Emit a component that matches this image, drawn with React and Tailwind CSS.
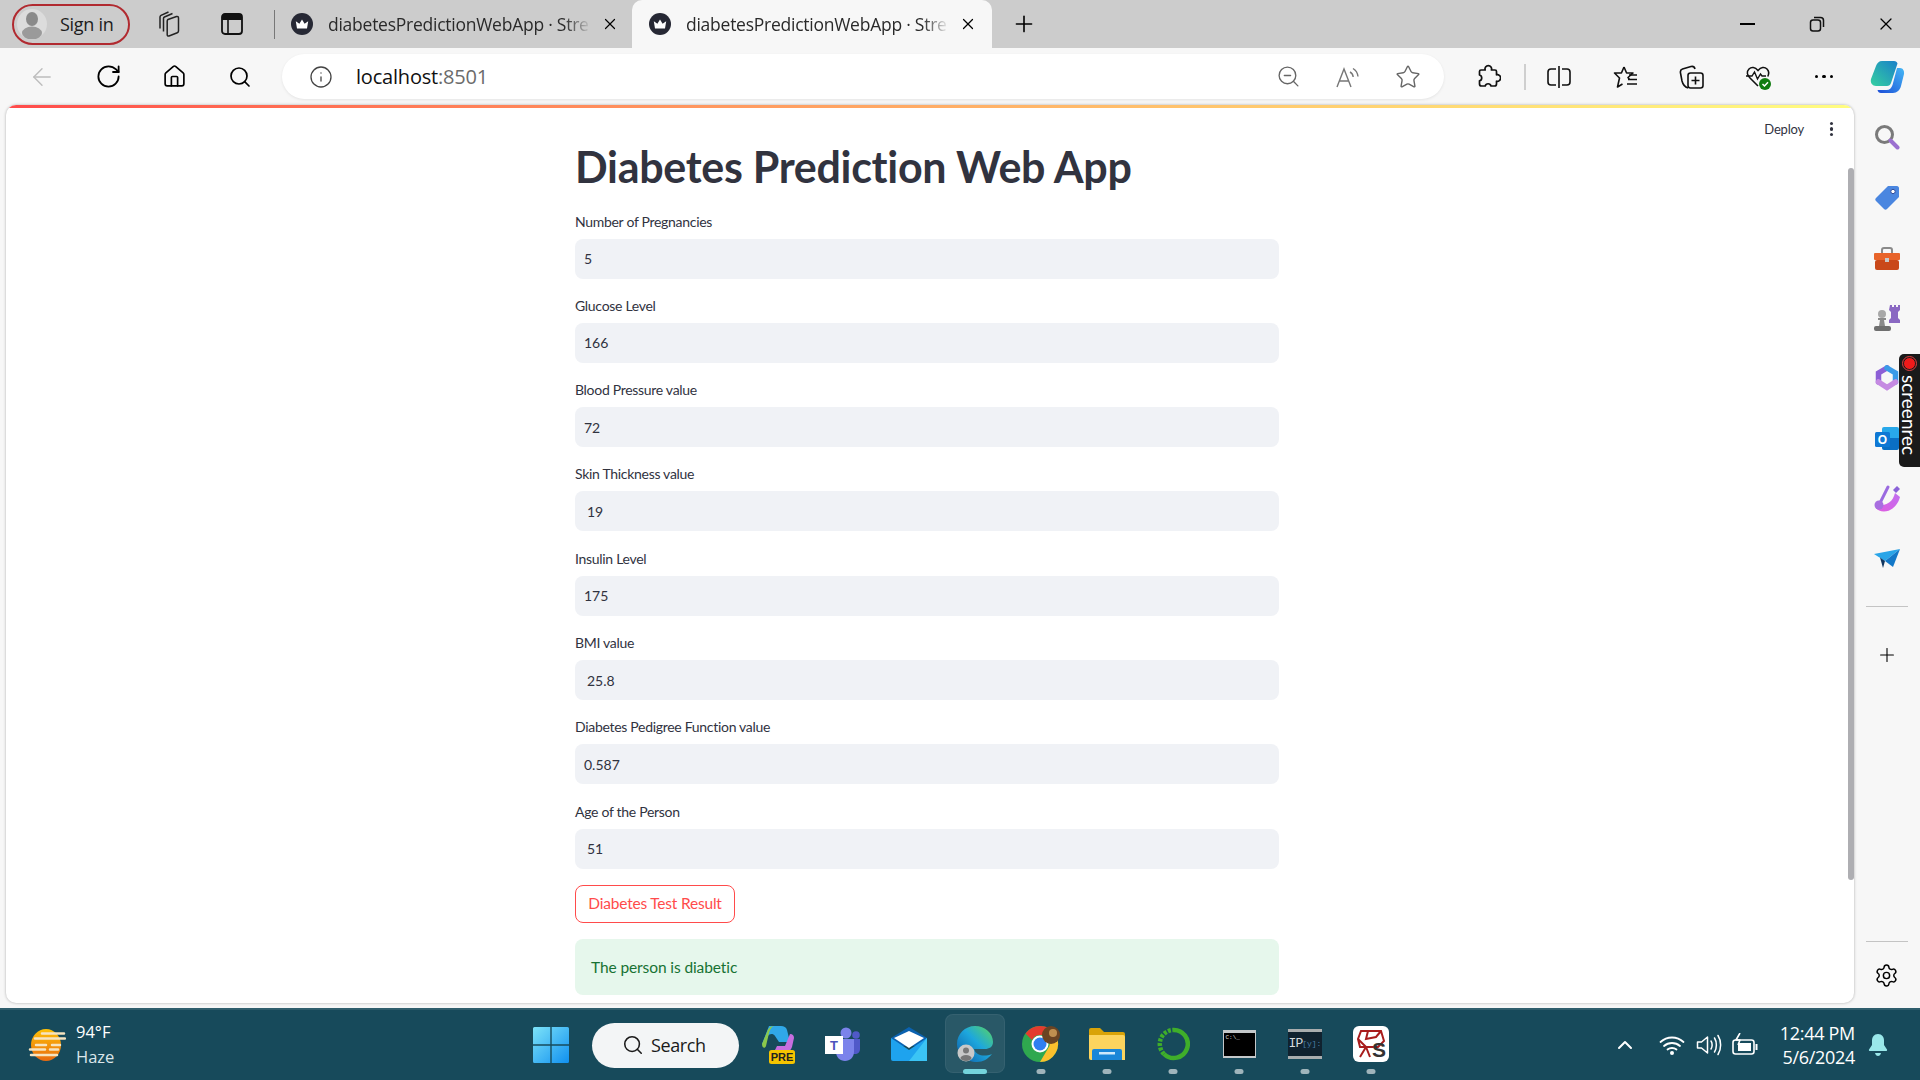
import {
  ArrowLeft,
  ChevronUp,
  House,
  Info,
  Plus,
  RotateCw,
  Search,
  Settings,
  Star,
  X,
  ZoomOut,
} from "lucide-react";

const fields = [
  { label: "Number of Pregnancies", value: "5", pad: "pl-[9px]" },
  { label: "Glucose Level", value: "166", pad: "pl-[9px]" },
  { label: "Blood Pressure value", value: "72", pad: "pl-[9px]" },
  { label: "Skin Thickness value", value: "19", pad: "pl-[12px]" },
  { label: "Insulin Level", value: "175", pad: "pl-[9px]" },
  { label: "BMI value", value: "25.8", pad: "pl-[12px]" },
  { label: "Diabetes Pedigree Function value", value: "0.587", pad: "pl-[9px]" },
  { label: "Age of the Person", value: "51", pad: "pl-[12px]" },
];

const Favicon = () => (
  <svg width="22" height="22" viewBox="0 0 22 22" className="shrink-0">
    <circle cx="11" cy="11" r="11" fill="#262834" />
    <path d="M6 15.5 4.8 8.2 8.4 10.8 11 6.5l2.6 4.3 3.6-2.6-1.2 7.3z" fill="#fff" />
  </svg>
);

const Tab = ({ active }) => (
  <div
    className={`flex items-center h-12 ${
      active ? "w-[360px] bg-[#f7f7f7] rounded-t-[10px] pl-[17px]" : "w-[357px] pl-[16px]"
    }`}
  >
    <Favicon />
    <span className="ml-[15px] w-[263px] whitespace-nowrap font-['Open_Sans',sans-serif] text-[17.5px] tracking-[-0.25px] text-[#2a2a2a] [mask-image:linear-gradient(90deg,#000_90%,transparent)]">
      diabetesPredictionWebApp · Stre
    </span>
    <X size={18} strokeWidth={1.6} className="ml-[10px] text-black" />
  </div>
);

const Slot = ({ w, children }) => (
  <div className={`flex items-center justify-center shrink-0 h-full ${w}`}>{children}</div>
);

const TabStrip = () => (
  <div className="flex items-center h-12 bg-[#cccccc] pl-3">
    <div className="flex items-center w-[118px] h-[41px] border-2 border-[#b12a30] rounded-full pl-[3px]">
      <svg width="30" height="30" viewBox="0 0 30 30">
        <circle cx="15" cy="15" r="15" fill="#dcdcdc" />
        <ellipse cx="15" cy="10" rx="6" ry="7" fill="#8a8a8a" />
        <ellipse cx="15" cy="24" rx="10" ry="6.5" fill="#9a9a9a" />
      </svg>
      <span className="ml-[13px] font-['Open_Sans',sans-serif] text-[18px] tracking-[-0.3px] text-[#1c1c1c]">Sign in</span>
    </div>
    <svg width="26" height="28" viewBox="0 0 26 28" fill="none" stroke="#222" strokeWidth="1.5" className="ml-[27px]">
      <path d="M11 9.5 19.5 6.5c1-.3 2 .3 2 1.4V21c0 .8-.4 1.4-1.2 1.7L12 26c-1 .3-1.8-.3-1.8-1.3V11c0-.7.3-1.2.8-1.5z" />
      <path d="M6.5 21.5V8.5c0-.7.3-1.2 1-1.5l8-3.5M3 18.5V7c0-.8.4-1.3 1-1.6L11.5 2" />
    </svg>
    <svg width="24" height="24" viewBox="0 0 24 24" className="ml-[37px]">
      <rect x="2" y="2" width="20" height="20" rx="3" fill="none" stroke="#111" strokeWidth="1.8" />
      <path d="M2 5a3 3 0 0 1 3-3h14a3 3 0 0 1 3 3v3H2z" fill="#111" />
      <path d="M8 8v14" stroke="#111" strokeWidth="1.6" />
    </svg>
    <div className="ml-[30px] w-px h-[29px] bg-[#777]" />
    <Tab />
    <Tab active />
    <Plus size={26} strokeWidth={1.5} className="ml-[19px] text-black" />
    <div className="ml-auto flex h-full">
      <Slot w="w-[69px]">
        <div className="w-[15px] h-[2px] bg-black" />
      </Slot>
      <Slot w="w-[69px]">
        <svg width="16" height="16" viewBox="0 0 16 16" fill="none" stroke="#111" strokeWidth="1.5">
          <rect x="1.5" y="4" width="10" height="11" rx="2.5" />
          <path d="M5 1.5h6.5a3 3 0 0 1 3 3V11" />
        </svg>
      </Slot>
      <Slot w="w-[69px]">
        <X size={20} strokeWidth={1.5} className="text-black" />
      </Slot>
    </div>
  </div>
);

const ReadAloud = () => (
  <svg width="28" height="26" viewBox="0 0 28 26" fill="none" stroke="#777" strokeWidth="1.4">
    <path d="M3 23 10 5l7 18M5.5 17h9" />
    <path d="M16 8c2 1 3 3 3.2 5M19 4.5c3 1.8 4.6 4.5 5 8" />
  </svg>
);

const PuzzleIcon = () => (
  <svg width="26" height="28" viewBox="0 0 26 28" fill="none" stroke="#111" strokeWidth="1.7" strokeLinejoin="round">
    <path d="M6 7h4.2a3.3 3.3 0 1 1 6.2 0H20a1.5 1.5 0 0 1 1.5 1.5v3.3a3.3 3.3 0 1 1 0 6.4V21a2 2 0 0 1-2 2H16a3 3 0 0 0-5.8 0H6.5a2 2 0 0 1-2-2v-3.2a3 3 0 0 0 0-5.8V8.5A1.5 1.5 0 0 1 6 7z" />
  </svg>
);

const SplitIcon = () => (
  <svg width="26" height="26" viewBox="0 0 26 26" fill="none" stroke="#111" strokeWidth="1.6">
    <path d="M10 5H5a3 3 0 0 0-3 3v10a3 3 0 0 0 3 3h5M16 5h5a3 3 0 0 1 3 3v10a3 3 0 0 1-3 3h-5M13 2v22" />
  </svg>
);

const FavIcon = () => (
  <svg width="26" height="26" viewBox="0 0 26 26" fill="none" stroke="#111" strokeWidth="1.6">
    <path d="M11 3l2.6 6H20l-5 4.5 1.4 2M11 3 8.4 9H1.5l5 5-2 9 5-3" strokeLinejoin="round" />
    <path d="M16 11h8M15 15.5h9M14 20h10" />
  </svg>
);

const CollectionsIcon = () => (
  <svg width="26" height="26" viewBox="0 0 26 26" fill="none" stroke="#111" strokeWidth="1.6">
    <path d="M9 24C6 23 4 21 3 17L1.5 9c-.4-2 .5-3.5 2-4L12 2.5c2-.5 3.5.5 4 2.5" />
    <rect x="9" y="9" width="15" height="15" rx="2.5" />
    <path d="M16.5 12.5v8M12.5 16.5h8" />
  </svg>
);

const HealthIcon = () => (
  <svg width="28" height="28" viewBox="0 0 28 28" fill="none" stroke="#111" strokeWidth="1.6">
    <path d="M13 23 5 15C2 12 1.5 8.5 4 6c2.5-2.5 6-2 9 1.5C16 4 19.5 3.5 22 6c2 2 2 5 .8 7.5" />
    <path d="M1 13h6l2.5-4 3 7 3-5 1.5 2h4" strokeWidth="1.4" />
    <circle cx="20" cy="21" r="6" fill="#107c10" stroke="none" />
    <path d="M17.5 21l2 2 3.5-3.8" stroke="#fff" strokeWidth="1.5" />
  </svg>
);

const DotsIcon = () => (
  <div className="flex gap-[4px]">
    <div className="w-[3.5px] h-[3.5px] rounded-full bg-black" />
    <div className="w-[3.5px] h-[3.5px] rounded-full bg-black" />
    <div className="w-[3.5px] h-[3.5px] rounded-full bg-black" />
  </div>
);

const EdgeCopilot = ({ size = 36 }) => (
  <svg width={size} height={size} viewBox="0 0 36 36">
    <defs>
      <linearGradient id="copA" x1="0" y1="1" x2="1" y2="0">
        <stop offset="0" stopColor="#35d0a0" />
        <stop offset="1" stopColor="#1a80c9" />
      </linearGradient>
      <linearGradient id="copB" x1="0" y1="1" x2="1" y2="0">
        <stop offset="0" stopColor="#1c4ed8" />
        <stop offset="1" stopColor="#45b7f5" />
      </linearGradient>
    </defs>
    <path d="M13 2h12c2 0 3 1 3.5 2.5L22 24c-.6 2-2 3-4 3H7c-3.5 0-6-3-5-7L7 7c1-3 3-5 6-5z" fill="url(#copA)" />
    <path d="M28 9h3c3 0 4.5 3 4 6l-3 12c-1 4-4 7-8 7H12c-2 0-3-1-3.5-3h9c3 0 5-2 6-5z" fill="url(#copB)" />
  </svg>
);

const Toolbar = () => (
  <div className="flex h-[57px] bg-[#f7f7f7] pl-[9px] pt-[6px] items-start">
    <div className="flex h-[45px]">
      <Slot w="w-[66px]">
        <ArrowLeft size={28} strokeWidth={1.2} className="text-[#bdbdbd]" />
      </Slot>
      <Slot w="w-[66px]">
        <RotateCw size={27} strokeWidth={1.6} className="text-black" />
      </Slot>
      <Slot w="w-[66px]">
        <House size={25} strokeWidth={1.6} className="text-black" />
      </Slot>
      <Slot w="w-[66px]">
        <Search size={24} strokeWidth={1.7} className="text-black" />
      </Slot>
    </div>
    <div className="ml-[9px] flex items-center w-[1162px] h-[45px] bg-white rounded-full shadow-[0_1px_3px_rgba(0,0,0,0.08)] pl-[27px]">
      <Info size={24} strokeWidth={1.3} className="text-[#444]" />
      <span className="ml-[23px] text-[20px] font-['Open_Sans',sans-serif] tracking-[-0.2px] text-[#111]">
        localhost<span className="text-[#6b6b6b]">:8501</span>
      </span>
      <div className="ml-auto mr-[6px] flex h-full">
        <Slot w="w-[60px]">
          <ZoomOut size={25} strokeWidth={1.3} className="text-[#666]" />
        </Slot>
        <Slot w="w-[60px]">
          <ReadAloud />
        </Slot>
        <Slot w="w-[60px]">
          <Star size={26} strokeWidth={1.3} className="text-[#666]" />
        </Slot>
      </div>
    </div>
    <div className="ml-3 flex h-[45px] items-center">
      <Slot w="w-[64px]">
        <PuzzleIcon />
      </Slot>
      <div className="ml-[4px] w-[2px] h-[26px] bg-[#cfcfcf]" />
      <Slot w="w-[66px]">
        <SplitIcon />
      </Slot>
      <Slot w="w-[68px]">
        <FavIcon />
      </Slot>
      <Slot w="w-[64px]">
        <CollectionsIcon />
      </Slot>
      <Slot w="w-[70px]">
        <HealthIcon />
      </Slot>
      <Slot w="w-[60px]">
        <DotsIcon />
      </Slot>
      <Slot w="w-[66px]">
        <EdgeCopilot />
      </Slot>
    </div>
  </div>
);

const Field = ({ label, value, pad }) => (
  <div className="h-[84.3px]">
    <div className="h-[44.3px] flex items-end pb-[7px]">
      <label className="text-[14px] leading-5 text-[#31333f] tracking-[-0.3px]">{label}</label>
    </div>
    <div className={`h-10 flex items-center bg-[#f0f2f6] rounded-lg text-[14px] text-[#31333f] ${pad}`}>
      {value}
    </div>
  </div>
);

const MainPanel = () => (
  <div className="relative flex flex-col w-[1848px] h-[898px] bg-white rounded-[10px] overflow-hidden shadow-[0_0_3px_rgba(0,0,0,0.3)]">
    <div className="h-[3px] shrink-0 bg-gradient-to-r from-[#ff4b4b] to-[#fffd80]" />
    <div className="flex justify-end items-start h-[37px] pt-[11px] shrink-0">
      <span className="text-[13px] leading-5 text-[#31333f] tracking-[-0.2px]">Deploy</span>
      <div className="w-[45px] ml-[5px] h-5 flex flex-col items-center justify-center gap-[2px]">
        <div className="w-[3.5px] h-[3.5px] rounded-full bg-[#31333f]" />
        <div className="w-[3.5px] h-[3.5px] rounded-full bg-[#31333f]" />
        <div className="w-[3.5px] h-[3.5px] rounded-full bg-[#31333f]" />
      </div>
    </div>
    <div className="ml-[569px] w-[704px]">
      <h1 className="h-[44px] mb-[5.3px] text-[43px] leading-[44px] font-bold text-[#31333f] tracking-[-0.3px] whitespace-nowrap">
        Diabetes Prediction Web App
      </h1>
      {fields.map((f) => (
        <Field key={f.label} {...f} />
      ))}
      <button className="mt-4 w-40 h-[38px] bg-white border border-[#ff4b4b] rounded-lg text-[15.5px] text-[#ff4b4b] tracking-[-0.2px]">
        Diabetes Test Result
      </button>
      <div className="mt-4 h-14 flex items-center pt-px bg-[#e6f7ec] rounded-lg pl-4 text-[15.5px] text-[#177233] tracking-[-0.1px]">
        The person is diabetic
      </div>
    </div>
    <div className="absolute right-0 top-[63px] w-[6px] h-[712px] bg-[#aeaeb2] rounded-full" />
  </div>
);

const SideIcon = ({ children }) => (
  <div className="h-[60.3px] flex items-center justify-center">{children}</div>
);

const SidePanel = () => (
  <div className="flex flex-col items-center w-[65px] pt-[2px]">
    <div className="w-full shrink-0">
      <SideIcon>
        <svg width="26" height="26" viewBox="0 0 26 26" fill="none">
          <circle cx="10.5" cy="10.5" r="8" stroke="#7a7a7a" strokeWidth="3" />
          <path d="M16.5 16.5 23.5 23.5" stroke="#9b6fd0" strokeWidth="4" strokeLinecap="round" />
        </svg>
      </SideIcon>
      <SideIcon>
        <svg width="26" height="26" viewBox="0 0 26 26" className="mt-[2px]">
          <path d="M14 1h9c1 0 2 1 2 2v9L13 24c-1 1-2 1-3 0L2 16c-1-1-1-2 0-3z" fill="#4a86e0" />
          <circle cx="19" cy="6.5" r="2.2" fill="#fff" stroke="#2f4a9a" strokeWidth="1" />
        </svg>
      </SideIcon>
      <SideIcon>
        <svg width="28" height="24" viewBox="0 0 28 24" className="mt-[2px]">
          <path d="M9 6V3c0-1 1-2 2-2h6c1 0 2 1 2 2v3" fill="none" stroke="#8a8a8a" strokeWidth="2" />
          <rect x="1" y="6" width="26" height="7" rx="1" fill="#e8642a" />
          <rect x="2" y="13" width="24" height="10" rx="2" fill="#c9481a" />
          <rect x="12" y="11" width="4" height="4" fill="#c8c8c8" />
        </svg>
      </SideIcon>
      <SideIcon>
        <svg width="28" height="28" viewBox="0 0 28 28">
          <path d="M17 1h2v2h2V1h2v2h2V1h2v5l-2 2v6l2 2v3H16v-3l2-2V8l-2-2z" fill="#8a68c2" />
          <circle cx="9" cy="10" r="4" fill="#a8a8a8" />
          <path d="M5 14h8v2h-2l1 6H6l1-6H5z" fill="#8a8a8a" />
          <rect x="1" y="22" width="17" height="5" rx="2" fill="#6f6f6f" />
        </svg>
      </SideIcon>
      <SideIcon>
        <svg width="24" height="26" viewBox="0 0 24 26" fill="none" strokeWidth="5.5" strokeLinecap="round">
          <path d="M12 3 3.5 8v9" stroke="#8c5fd6" />
          <path d="M12 3l8.5 5v9" stroke="#3a9be8" />
          <path d="M3.5 17l8.5 5.5 8.5-5.5" stroke="#c58ae2" />
        </svg>
      </SideIcon>
      <SideIcon>
        <svg width="24" height="26" viewBox="0 0 24 26">
          <rect x="7" y="1" width="17" height="21" rx="2" fill="#28a8ea" />
          <path d="M7 12h17v10a2 2 0 0 1-2 2H9a2 2 0 0 1-2-2z" fill="#0a6fc4" />
          <rect x="0" y="6" width="15" height="15" rx="1.5" fill="#0f78d4" />
          <text x="7.5" y="18" textAnchor="middle" fontSize="12" fontWeight="700" fill="#fff" fontFamily="Liberation Sans, sans-serif">
            O
          </text>
        </svg>
      </SideIcon>
      <SideIcon>
        <svg width="28" height="30" viewBox="0 0 28 30">
          <defs>
            <linearGradient id="designer" x1="0" y1="1" x2="1" y2="0">
              <stop offset="0" stopColor="#e05be0" />
              <stop offset="1" stopColor="#c070f0" />
            </linearGradient>
          </defs>
          <path d="M2 22c2 8 20 9 25-9l-5-4c-2 8-7 13-20 13z" fill="url(#designer)" />
          <path d="M7 19 15 3" stroke="#9a6ae0" strokeWidth="3" strokeLinecap="round" />
          <circle cx="6" cy="21" r="4.5" fill="#a86ee0" />
          <path d="M20 6l4-4 3 3-4 4z" fill="#8a62d8" />
        </svg>
      </SideIcon>
      <SideIcon>
        <svg width="26" height="20" viewBox="0 0 26 20">
          <path d="M0 5 26 0 11 12z" fill="#29a5e8" />
          <path d="M26 0 19 18 11 12z" fill="#1378c8" />
          <path d="M6 8.5 11 12l-2 7z" fill="#11365f" />
        </svg>
      </SideIcon>
    </div>
    <div className="mt-[16.6px] w-[42px] h-px bg-[#c4c4c4] shrink-0" />
    <div className="h-[96px] flex items-center justify-center shrink-0">
      <Plus size={22} strokeWidth={1.2} className="text-black" />
    </div>
    <div className="mt-auto w-[42px] h-px bg-[#c4c4c4] shrink-0" />
    <div className="h-[66px] flex items-center justify-center shrink-0">
      <Settings size={25} strokeWidth={1.4} className="text-black" />
    </div>
  </div>
);

const Dot = ({ active }) => (
  <div
    className={`absolute bottom-[6px] left-1/2 -translate-x-1/2 h-[5px] rounded-full ${
      active ? "w-[24px] bg-[#74d4dc]" : "w-[9px] bg-[#9fb4bb]"
    }`}
  />
);

const AppSlot = ({ children, dot, active }) => (
  <div className="relative w-[66px] h-full flex items-center justify-center shrink-0">
    {active && <div className="absolute left-[3px] top-[4px] w-[60px] h-[59px] rounded-lg bg-[#ffffff14] border border-[#ffffff0f]" />}
    <div className="relative flex -mt-[3px]">{children}</div>
    {(dot || active) && <Dot active={active} />}
  </div>
);

const Taskbar = () => (
  <div className="flex items-center h-[72px] bg-[#174a5b] border-t-2 border-[#2f5e6d] text-white">
    <div className="flex items-center w-[526px] pl-[28px] shrink-0">
      <svg width="38" height="34" viewBox="0 0 38 34">
        <defs>
          <linearGradient id="sun" x1="0" y1="0" x2="0" y2="1">
            <stop offset="0" stopColor="#ffc107" />
            <stop offset="1" stopColor="#e86a10" />
          </linearGradient>
        </defs>
        <ellipse cx="18" cy="17" rx="15" ry="16" fill="url(#sun)" />
        <path d="M14 5.5h22M7 10.5h30M8 17h10M24 17h8M2 21.5h15M22 21.5h8M3 27h26" stroke="#f6e4c0" strokeWidth="2.5" strokeLinecap="round" />
      </svg>
      <div className="ml-[10px] flex flex-col font-['Open_Sans',sans-serif] text-[16.5px] leading-[25px] -mt-[2px]">
        <span>94°F</span>
        <span className="text-[#dbe6ea]">Haze</span>
      </div>
    </div>
    <svg width="36" height="36" viewBox="0 0 36 36" className="ml-[7px] shrink-0">
      <defs>
        <linearGradient id="win" x1="0" y1="0" x2="1" y2="1">
          <stop offset="0" stopColor="#7de3f8" />
          <stop offset="1" stopColor="#1090f0" />
        </linearGradient>
      </defs>
      <path d="M0 1.5A1.5 1.5 0 0 1 1.5 0h15.8v17.3H0zM18.7 0h15.8A1.5 1.5 0 0 1 36 1.5v15.8H18.7zM0 18.7h17.3V36H1.5A1.5 1.5 0 0 1 0 34.5zM18.7 18.7H36v15.8a1.5 1.5 0 0 1-1.5 1.5H18.7z" fill="url(#win)" />
    </svg>
    <div className="ml-[23px] flex items-center w-[147px] h-[45px] bg-[#f3f5f6] rounded-full pl-[30px] text-[#1a1a1a] shrink-0">
      <Search size={22} strokeWidth={1.7} />
      <span className="ml-[7px] text-[18px] font-['Open_Sans',sans-serif] tracking-[-0.4px]">Search</span>
    </div>
    <div className="ml-[5px] flex h-full">
      <AppSlot>
        <svg width="36" height="40" viewBox="0 0 36 40">
          <path d="M10 2h12c3 0 5 1 6 4l3 12H20l-4-6c-2-3-6-2-7 0L6 20H3z" fill="#30a8e8" />
          <path d="M3 20 8 8c1-3 3-6 7-6-3 1-4 4-5 7l-3 13c-1 3-4 2-4-2z" fill="#8cc84b" />
          <path d="M31 10c3 0 4 2 4 4l-2 9c-1 3-3 5-6 5H15l3-6h8z" fill="#c86ee0" />
          <rect x="10" y="26" width="26" height="14" rx="2.5" fill="#f5c400" />
          <text x="23" y="37" textAnchor="middle" fontSize="11" fontWeight="700" fill="#222" fontFamily="Liberation Sans, sans-serif">
            PRE
          </text>
        </svg>
      </AppSlot>
      <AppSlot>
        <svg width="36" height="34" viewBox="0 0 36 34">
          <circle cx="21" cy="6" r="5.5" fill="#7b83eb" />
          <circle cx="31" cy="8" r="3.8" fill="#5059c9" />
          <path d="M25 12h10v10c0 3-2 5-5 5-3 0-5-2-5-5z" fill="#5059c9" />
          <path d="M11 12h18v13c0 5-4 9-9 9s-9-4-9-9z" fill="#7b83eb" />
          <rect x="0" y="9" width="18" height="18" fill="#fff" />
          <text x="9" y="23" textAnchor="middle" fontSize="13" fontWeight="700" fill="#4b53bc" fontFamily="Liberation Sans, sans-serif">
            T
          </text>
        </svg>
      </AppSlot>
      <AppSlot>
        <svg width="36" height="34" viewBox="0 0 36 34">
          <path d="M0 11 18 0l18 11v8H0z" fill="#0b62b0" />
          <path d="M3 11 18 4l15 7-15 10z" fill="#fff" />
          <path d="M0 11l18 12 18-12v21a2 2 0 0 1-2 2H2a2 2 0 0 1-2-2z" fill="#1ea3ee" />
          <path d="M36 11v23H18L36 11z" fill="#3bc4f5" />
        </svg>
      </AppSlot>
      <AppSlot active>
        <svg width="36" height="36" viewBox="0 0 36 36">
          <defs>
            <linearGradient id="edgeG" x1="0" y1="1" x2="1" y2="0">
              <stop offset="0" stopColor="#0c59a4" />
              <stop offset="0.55" stopColor="#1da7dd" />
              <stop offset="1" stopColor="#5bd65e" />
            </linearGradient>
          </defs>
          <path d="M18 0c10 0 18 7 18 16 0 5-4 7-8 7H17c2 7 11 8 18 5-4 5-9 8-15 8C9 36 0 28 0 18S8 0 18 0z" fill="url(#edgeG)" />
          <circle cx="9" cy="27" r="8.5" fill="#c8c8c8" />
          <circle cx="9" cy="24.5" r="3" fill="#777" />
          <ellipse cx="9" cy="32" rx="5.5" ry="3" fill="#777" />
        </svg>
      </AppSlot>
      <AppSlot dot>
        <svg width="38" height="36" viewBox="0 0 38 36">
          <circle cx="18" cy="18" r="18" fill="#2fa84f" />
          <path d="M18 0a18 18 0 0 1 15.6 9H18a9 9 0 0 0-8 5L3.5 7.5A18 18 0 0 1 18 0z" fill="#e33b2e" />
          <path d="M33.6 9A18 18 0 0 1 18 36l8-13.5A9 9 0 0 0 26 12z" fill="#fbc02d" />
          <circle cx="18" cy="18" r="8.5" fill="#fff" />
          <circle cx="18" cy="18" r="6.5" fill="#2f7ff0" />
          <circle cx="29" cy="9" r="9" fill="#6b4423" />
          <circle cx="31" cy="7" r="4" fill="#c09050" />
        </svg>
      </AppSlot>
      <AppSlot dot>
        <svg width="36" height="33" viewBox="0 0 36 33">
          <path d="M0 3a2 2 0 0 1 2-2h9l4 4h19a2 2 0 0 1 2 2v5H0z" fill="#d9a308" />
          <path d="M0 8h34a2 2 0 0 1 2 2v23H2a2 2 0 0 1-2-2z" fill="#fcd45e" />
          <path d="M3 33v-9a2 2 0 0 1 2-2h26a2 2 0 0 1 2 2v9z" fill="#1a86d8" />
          <rect x="10" y="25" width="16" height="2.5" fill="#cfe9fb" />
        </svg>
      </AppSlot>
      <AppSlot dot>
        <svg width="34" height="34" viewBox="0 0 34 34" fill="none">
          <path d="M17 3a14 14 0 1 1-9 24" stroke="#3fae2a" strokeWidth="4.5" />
          <path d="M8 27A14 14 0 0 1 17 3" stroke="#3fae2a" strokeWidth="4.5" strokeDasharray="3 1.5" />
        </svg>
      </AppSlot>
      <AppSlot dot>
        <div className="w-[33px] h-[28px] bg-black border-t-[3px] border-x border-b-2 border-[#c4c8ca] flex items-start pl-[2px] pt-[1px] text-[6px] leading-[8px] font-['Liberation_Mono',monospace] text-[#ddd]">
          C:\_
        </div>
      </AppSlot>
      <AppSlot dot>
        <div className="w-[34px] h-[30px] bg-[#10222f] border-y-[3px] border-[#a9adae] flex items-center justify-center whitespace-nowrap text-[13px] leading-none tracking-[-1px] font-['Liberation_Mono',monospace] text-[#d5dadd]">
          IP<span className="text-[#4a7ea8] text-[8px] tracking-normal">[y]:</span>
        </div>
      </AppSlot>
      <AppSlot dot>
        <div className="relative w-[36px] h-[36px] bg-white rounded-[6px] flex items-center justify-center">
          <svg width="30" height="30" viewBox="0 0 30 30" fill="none" stroke="#a81c1c" strokeWidth="2">
            <path d="M5 2h20l3 10-6 6H4l-2-8zM12 2l-2 8 10-2 5-6M2 10l8 8-6 10M10 18l4 10" />
          </svg>
          <span className="absolute right-[3px] bottom-[2px] text-[21px] leading-none font-bold font-['Liberation_Sans',sans-serif] text-[#333]">S</span>
        </div>
      </AppSlot>
    </div>
    <div className="ml-auto flex items-center pr-[32px] h-full">
      <ChevronUp size={24} strokeWidth={2} />
      <svg width="26" height="22" viewBox="0 0 26 22" fill="none" stroke="#fff" strokeWidth="1.8" className="ml-[22px]">
        <path d="M1.5 8c6.5-6 16.5-6 23 0M5 12c4.5-4 11.5-4 16 0M8.5 15.5c2.5-2 6.5-2 9 0" strokeLinecap="round" />
        <circle cx="13" cy="19" r="2" fill="#fff" stroke="none" />
      </svg>
      <svg width="26" height="24" viewBox="0 0 26 24" fill="none" stroke="#fff" strokeWidth="1.5" className="ml-[11px]">
        <path d="M1.5 9v6h4l6 5V4l-6 5z" strokeLinejoin="round" />
        <path d="M15 8c1.5 2 1.5 6 0 8M18.5 5c2.5 4 2.5 10 0 14M22 2.5c3.5 5.5 3.5 13.5 0 19" strokeLinecap="round" />
      </svg>
      <svg width="26" height="24" viewBox="0 0 26 24" fill="none" stroke="#fff" strokeWidth="1.6" className="ml-[10px]">
        <rect x="1" y="7" width="21" height="14" rx="2.5" />
        <rect x="6" y="10" width="13" height="8" fill="#fff" stroke="none" />
        <path d="M24.5 11v6" strokeWidth="2" />
        <path d="M8 0 4 7h4L6 12" strokeLinejoin="round" />
      </svg>
      <div className="ml-[17px] w-[80px] text-right font-['Open_Sans',sans-serif] text-[18px] leading-[24px] tracking-[-0.3px] whitespace-nowrap">
        <div>12:44 PM</div>
        <div>5/6/2024</div>
      </div>
      <svg width="20" height="24" viewBox="0 0 20 24" className="ml-[13px]">
        <path d="M10 1c-4 0-6 3-6 6.5V12L1 16.5c-.3.8 0 1.5 1 1.5h16c1 0 1.3-.7 1-1.5L16 12V7.5C16 4 14 1 10 1z" fill="#9ae8ea" />
        <path d="M7 20h6c-.5 2-1.5 3-3 3s-2.5-1-3-3z" fill="#9ae8ea" />
      </svg>
    </div>
  </div>
);

const App = () => {
  return (
    <div className="relative w-[1920px] h-[1080px] flex flex-col overflow-hidden font-['Lato',sans-serif]">
      <TabStrip />
      <Toolbar />
      <div className="flex h-[903px] bg-[#f7f7f7] pl-[6px]">
        <MainPanel />
        <SidePanel />
      </div>
      <Taskbar />
      <div className="absolute right-0 top-[354px] w-[21px] h-[113px] bg-[#1a1a1a] rounded-l-[5px] flex flex-col items-center pt-[3px]">
        <div className="w-[13px] h-[13px] rounded-full bg-[#f01a1a] border border-[#1a1a1a] outline outline-[#e04040] shrink-0" />
        <span className="mt-[5px] [writing-mode:vertical-rl] text-[19px] leading-[19px] text-white">screenrec</span>
      </div>
    </div>
  );
};

export default App;
